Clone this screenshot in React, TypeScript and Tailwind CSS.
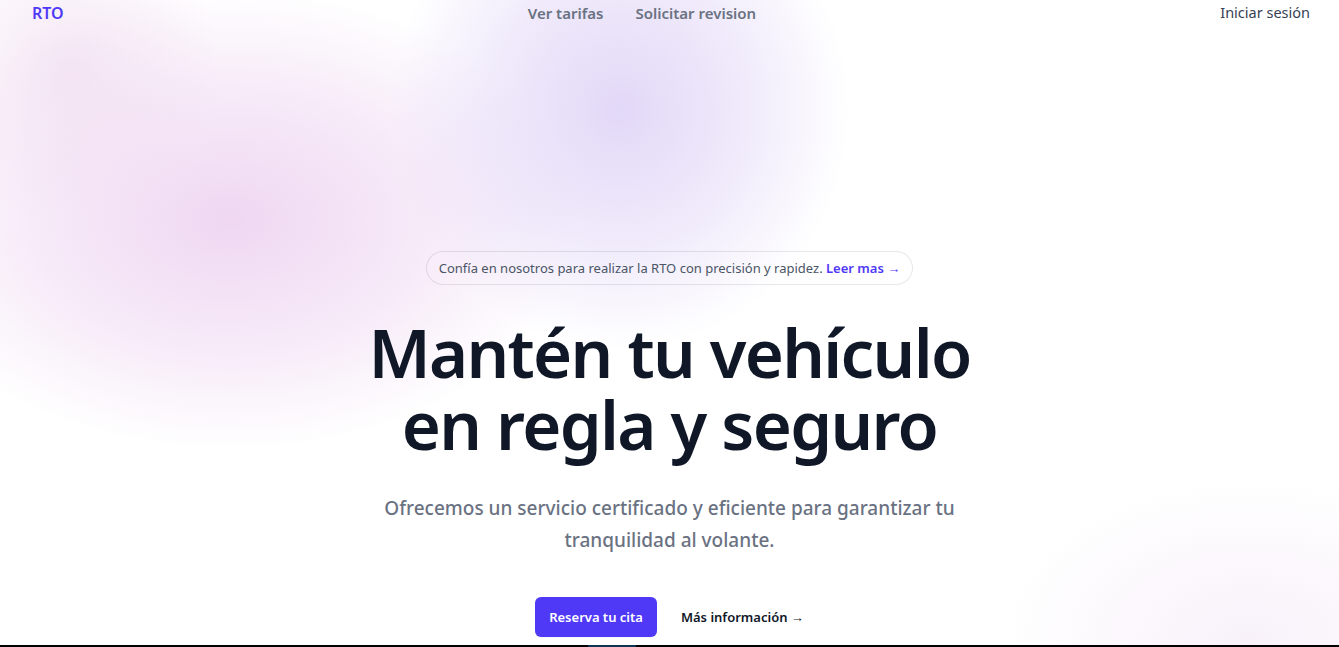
import React from "react";

export default function App() {
  return (
    <div className="relative min-h-[647px] w-full overflow-hidden bg-white font-['Noto_Sans',sans-serif]">
      {/* background blobs */}
      <div className="pointer-events-none absolute inset-0" aria-hidden="true">
        <div className="absolute left-[-120px] top-[-10px] h-[460px] w-[700px] bg-[radial-gradient(closest-side,rgba(236,208,240,0.85),rgba(236,208,240,0.45)_55%,rgba(255,255,255,0))]" />
        <div className="absolute left-[390px] top-[-130px] h-[480px] w-[460px] bg-[radial-gradient(closest-side,rgba(225,214,247,0.95),rgba(225,214,247,0.5)_55%,rgba(255,255,255,0))]" />
        <div className="absolute left-[-80px] top-[-80px] h-[300px] w-[300px] bg-[radial-gradient(closest-side,rgba(240,220,240,0.7),rgba(255,255,255,0))]" />
        <div className="absolute left-[1000px] top-[480px] h-[320px] w-[500px] bg-[radial-gradient(closest-side,rgba(245,235,248,0.7),rgba(255,255,255,0))]" />
      </div>

      <header className="relative">
        <nav className="flex h-[26px] items-center justify-between pl-8 pr-[29px]">
          <a className="text-base font-semibold text-indigo-600">RTO</a>
          <div className="flex gap-x-8">
            <a className="text-[15px] font-semibold text-gray-500">Ver tarifas</a>
            <a className="text-[15px] font-semibold text-gray-500">Solicitar revision</a>
          </div>
          <a className="text-[14.5px] text-gray-700">Iniciar sesión</a>
        </nav>
      </header>

      <main className="relative flex flex-col items-center pt-[226px]">
        <div className="rounded-full px-3 py-1 text-[13px] leading-6 text-gray-600 ring-1 ring-gray-900/10">
          Confía en nosotros para realizar la RTO con precisión y rapidez.{" "}
          <a className="font-semibold text-indigo-600">Leer mas <span aria-hidden="true">→</span></a>
        </div>
        <h1 className="mt-8 text-center text-[67px] font-semibold leading-[72px] tracking-tight text-gray-900">
          Mantén tu vehículo
          <br />
          en regla y seguro
        </h1>
        <p className="mt-8 max-w-[610px] text-center text-[19px] font-medium leading-8 text-gray-500">
          Ofrecemos un servicio certificado y eficiente para garantizar tu tranquilidad al volante.
        </p>
        <div className="mt-[41px] flex items-center gap-x-6">
          <a className="rounded-md bg-indigo-600 px-3.5 py-2.5 text-[13px] font-semibold leading-5 text-white shadow-xs">
            Reserva tu cita
          </a>
          <a className="text-[13px] font-semibold leading-6 text-gray-900">
            Más información <span aria-hidden="true">→</span>
          </a>
        </div>
      </main>

      <div className="relative mt-2 flex h-[2px] bg-black pl-[588px]">
        <div className="h-[2px] w-12 bg-[#0c3350]" />
      </div>
    </div>
  );
}
